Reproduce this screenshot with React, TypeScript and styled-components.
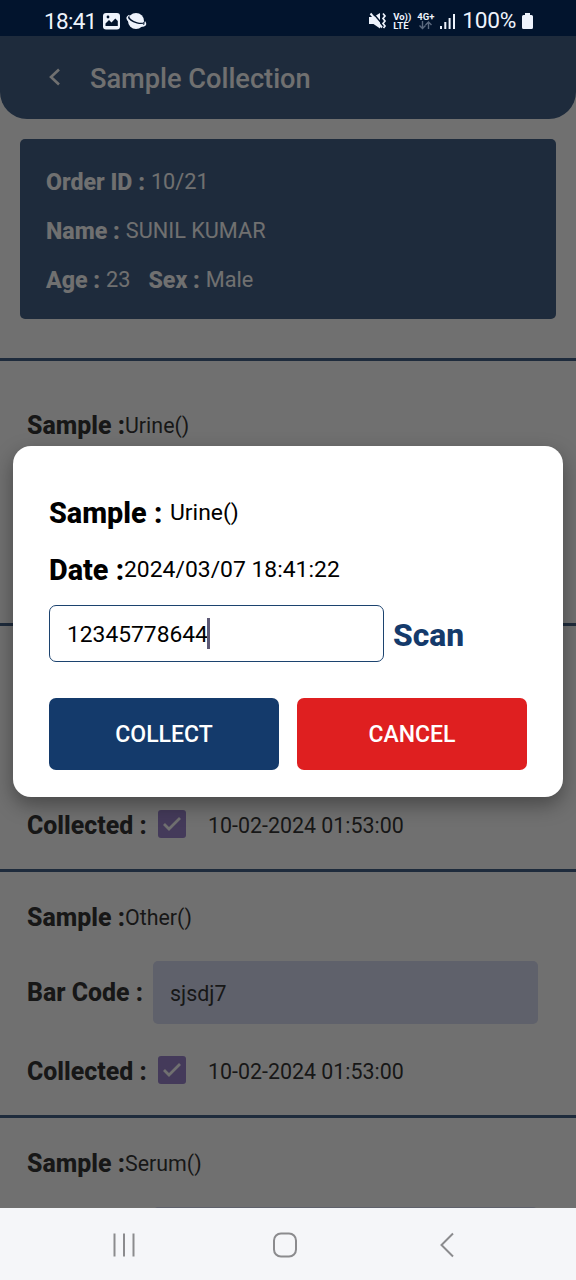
import React from "react";
import styled, { createGlobalStyle } from "styled-components";

const Global = createGlobalStyle`
  * { box-sizing: border-box; }
  body { margin: 0; background: #ffffff; font-family: Roboto, "Liberation Sans", sans-serif; }
`;

const Screen = styled.div`
  width: 576px;
  height: 1280px;
  display: flex;
  flex-direction: column;
  overflow: hidden;
`;

const StatusBar = styled.div`
  height: 36px;
  flex: none;
  padding: 6px 43px 0 44px;
  display: flex;
  justify-content: space-between;
  background: #02142d;
  color: #eef3fc;
`;

const StatusGroup = styled.div<{ $gap: number }>`
  height: 30px;
  display: flex;
  align-items: center;
  gap: ${(p) => p.$gap}px;
`;

const StatusText = styled.span<{ $size: number; $spacing: number }>`
  font-size: ${(p) => p.$size}px;
  letter-spacing: ${(p) => p.$spacing}px;
  line-height: 30px;
`;

const Network = styled.div`
  display: flex;
  flex-direction: column;
  align-items: flex-start;
  font-size: 9.5px;
  font-weight: 700;
  line-height: 9px;
`;

const Page = styled.main`
  position: relative;
  height: 1172px;
  flex: none;
  overflow: hidden;
  background: #ffffff;
`;

const Header = styled.header`
  height: 83px;
  padding: 2px 0 0 48px;
  display: flex;
  align-items: center;
  background: #143a6b;
  border-radius: 0 0 27px 27px;
  color: #ffffff;
`;

const BackIcon = styled.svg`
  margin-bottom: 3px;
`;

const Title = styled.h1`
  margin: 0 0 0 28px;
  font-size: 27.2px;
  font-weight: 500;
`;

const OrderCard = styled.section`
  height: 180px;
  margin: 20px 20px 39px;
  padding: 18px 26px 0;
  display: flex;
  flex-direction: column;
  background: #143a6b;
  border-radius: 5px;
  color: #ffffff;
`;

const OrderLine = styled.div`
  height: 49px;
  flex: none;
  display: flex;
  align-items: center;
  gap: 6px;
  font-size: 21.7px;
`;

const Strong = styled.b<{ $indent?: number }>`
  margin-left: ${(p) => p.$indent ?? 0}px;
  font-size: 23.2px;
  font-weight: 800;
`;

const SampleSection = styled.section<{ $top: number }>`
  padding: ${(p) => p.$top}px 27px 19px;
  border-bottom: 3px solid #143a6b;
  color: #000000;
`;

const List = styled.div`
  border-top: 3px solid #143a6b;
`;

const Row = styled.div`
  height: 50px;
  display: flex;
  align-items: center;
  font-size: 21.4px;
`;

const BarcodeRow = styled(Row)`
  height: 63px;
  margin: 19px 0 22px;
`;

const Label = styled.b<{ $width: number }>`
  width: ${(p) => p.$width}px;
  font-size: 24.9px;
  font-weight: 800;
  white-space: nowrap;
`;

const Barcode = styled.div`
  width: 385px;
  height: 63px;
  margin-left: auto;
  margin-right: 11px;
  padding: 2px 0 0 17px;
  display: flex;
  align-items: center;
  background: #cdd3f0;
  border-radius: 5px;
`;

const CheckBox = styled.span`
  width: 28px;
  height: 28px;
  margin: 0 22px 2px 0;
  display: flex;
  align-items: center;
  justify-content: center;
  background: #8164c0;
  border-radius: 3px;
  color: #ffffff;
`;

const Scrim = styled.div`
  position: absolute;
  inset: 0;
  padding: 410px 13px 0;
  background: rgba(35, 35, 35, 0.65);
`;

const Dialog = styled.div`
  height: 351px;
  padding: 38px 36px 0;
  background: #ffffff;
  border-radius: 18px;
  box-shadow: 0 8px 20px rgba(0, 0, 0, 0.36);
  color: #000000;
`;

const DialogLine = styled.div`
  height: 57px;
  display: flex;
  align-items: center;
  font-size: 22.9px;
`;

const DialogLabel = styled.b<{ $width: number }>`
  width: ${(p) => p.$width}px;
  font-size: 28.8px;
  font-weight: 800;
  white-space: nowrap;
`;

const ScanRow = styled.div`
  margin-top: 7px;
  height: 57px;
  display: flex;
  align-items: center;
  gap: 9px;
`;

const CodeField = styled.div`
  width: 335px;
  height: 57px;
  padding: 2px 0 0 17px;
  display: flex;
  align-items: center;
  border: 1.5px solid #1c436f;
  border-radius: 7px;
  font-size: 22.8px;
`;

const Caret = styled.i`
  width: 3px;
  height: 31px;
  margin: 0 0 2px -1px;
  background: #5e5a76;
`;

const Scan = styled.span`
  padding-top: 2px;
  color: #143a6b;
  font-size: 31.8px;
  font-weight: 800;
`;

const Buttons = styled.div`
  margin-top: 36px;
  display: flex;
  gap: 18px;
`;

const Button = styled.button<{ $color: string }>`
  flex: 1;
  height: 72px;
  padding: 1px 0 0;
  border: 0;
  border-radius: 7px;
  background: ${(p) => p.$color};
  color: #ffffff;
  font: 500 23px Roboto, "Liberation Sans", sans-serif;
`;

const NavBar = styled.nav`
  height: 72px;
  flex: none;
  padding: 2px 0 0 112px;
  display: flex;
  align-items: center;
  background: #f5f6f9;
`;

const NavIcon = styled.svg<{ $before?: number }>`
  margin-left: ${(p) => p.$before ?? 0}px;
  fill: none;
  stroke: #8b8b8e;
  stroke-width: 2;
`;

const samples = [
  { name: "Urine()", code: "sjsdj7", top: 39 },
  { name: "Serum()", code: "sjsdj7", top: 20 },
  { name: "Other()", code: "sjsdj7", top: 20 },
  { name: "Serum()", top: 20 },
];

export default function App() {
  return (
    <Screen>
      <Global />
      <StatusBar>
        <StatusGroup $gap={6}>
          <StatusText $size={22.5} $spacing={-0.7}>18:41</StatusText>
          <svg width="46" height="20" viewBox="104 11 46 20" fill="none">
            <rect x="104" y="13" width="17" height="16.500" rx="3" fill="#eef3fc" />
            <path d="M106.500 26v-2.500l3.500-3.500 2.500 2.500 3.800-4 2.500 2.500v5z" fill="#02142d" />
            <circle cx="109" cy="17" r="1.400" fill="#02142d" />
            <circle cx="137" cy="21" r="8" fill="#eef3fc" />
            <path d="M130.500 15.500c-5 2.500-1 6.500 6 9s12 1.500 9-2.600" stroke="#eef3fc" strokeWidth="1.800" />
            <path d="M129.500 16.500c.5 2.500 4 5 8.500 6.300 3.500 1 6 .8 7.500-.3" stroke="#02142d" strokeWidth="1.300" />
          </svg>
        </StatusGroup>
        <StatusGroup $gap={6}>
          <svg width="18" height="18" viewBox="0 0 18 18" fill="none">
            <path d="M0 5h4.500L11 1v15.500L4.500 12H0z" fill="#eef3fc" />
            <path d="M3.500.5l11 13" stroke="#02142d" strokeWidth="1.400" />
            <path d="M1.500 1.500l11.500 14" stroke="#eef3fc" strokeWidth="2" />
            <path d="M14 1.500l2 2.500-2 2.500 2 2.500-2 2.500 2 2.500-1.500 2" stroke="#eef3fc" strokeWidth="1.700" />
          </svg>
          <Network><span>Vo))</span><span>LTE</span></Network>
          <Network>
            <span>4G+</span>
            <svg width="17" height="9" viewBox="-2 0 17 9" fill="none" stroke="#5b697e" strokeWidth="1.400">
              <path d="M3.500 0v7M.5 4.500l3 3 3-3M9.500 8V1M6.500 4l3-3 3 3" />
            </svg>
          </Network>
          <svg width="16" height="17" viewBox="0 0 16 17" fill="#eef3fc">
            <path d="M0 13h2v3H0zM4.300 9h2v7h-2zM8.600 5h2v11h-2zM13 1h2v15h-2z" />
          </svg>
          <StatusText $size={22.7} $spacing={-0.3}>100%</StatusText>
          <svg width="11" height="17" viewBox="0 0 11 17" fill="#eef3fc">
            <path d="M3 0h5v2h1.500Q11 2 11 3.500v11Q11 16 9.500 16h-8Q0 16 0 14.500v-11Q0 2 1.500 2H3z" />
          </svg>
        </StatusGroup>
      </StatusBar>
      <Page>
        <Header>
          <BackIcon width="14" height="18" viewBox="0 0 14 18" fill="none" stroke="#fff" strokeWidth="2.600">
            <path d="M11 1.500L3 9l8 7.500" />
          </BackIcon>
          <Title>Sample Collection</Title>
        </Header>
        <OrderCard>
          <OrderLine><Strong>Order ID :</Strong><span>10/21</span></OrderLine>
          <OrderLine><Strong>Name :</Strong><span>SUNIL KUMAR</span></OrderLine>
          <OrderLine><Strong>Age :</Strong><span>23</span><Strong $indent={12}>Sex :</Strong><span>Male</span></OrderLine>
        </OrderCard>
        <List>
          {samples.map((s, i) => (
            <SampleSection key={i} $top={s.top}>
              <Row><Label $width={98}>Sample :</Label>{s.name}</Row>
              <BarcodeRow>
                {s.code ? <Label $width={115}>Bar Code :</Label> : null}
                <Barcode>{s.code}</Barcode>
              </BarcodeRow>
              {s.code ? (
                <Row>
                  <Label $width={131}>Collected :</Label>
                  <CheckBox>
                    <svg width="18" height="14" viewBox="0 0 18 14" fill="none" stroke="currentColor" strokeWidth="2.800">
                      <path d="M1 7l5 5L17 1" />
                    </svg>
                  </CheckBox>
                  10-02-2024 01:53:00
                </Row>
              ) : null}
            </SampleSection>
          ))}
        </List>
        <Scrim>
          <Dialog>
            <DialogLine><DialogLabel $width={121}>Sample :</DialogLabel>Urine()</DialogLine>
            <DialogLine><DialogLabel $width={75}>Date :</DialogLabel>2024/03/07 18:41:22</DialogLine>
            <ScanRow>
              <CodeField>12345778644<Caret /></CodeField>
              <Scan>Scan</Scan>
            </ScanRow>
            <Buttons>
              <Button $color="#143a6b">COLLECT</Button>
              <Button $color="#df1f20">CANCEL</Button>
            </Buttons>
          </Dialog>
        </Scrim>
      </Page>
      <NavBar>
        <NavIcon width="24" height="26" viewBox="0 0 24 26">
          <path d="M2.500 1.500v23M12 1.500v23M21.500 1.500v23" />
        </NavIcon>
        <NavIcon $before={136} width="26" height="26" viewBox="0 0 26 26">
          <rect x="2" y="1.500" width="22" height="23" rx="7" />
        </NavIcon>
        <NavIcon $before={141} width="16" height="26" viewBox="0 0 16 26">
          <path d="M14 1.500L2.500 13 14 24.500" />
        </NavIcon>
      </NavBar>
    </Screen>
  );
}
